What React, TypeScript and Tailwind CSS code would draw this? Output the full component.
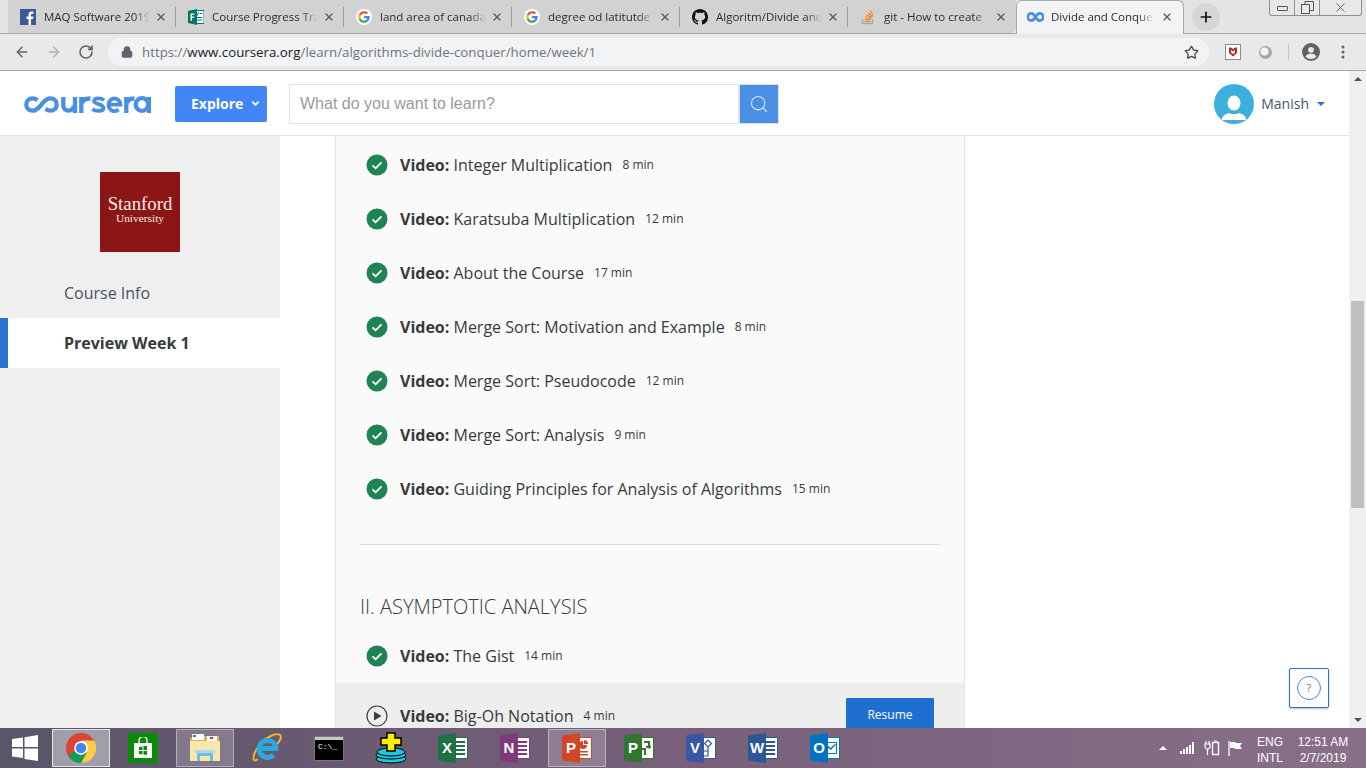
import React from "react";
import { Lock, Star, ArrowLeft, ArrowRight, RotateCw, X, Plus, Search, ChevronDown } from "lucide-react";

const tabs = [
  { t: "MAQ Software 2019", i: "fb" },
  { t: "Course Progress Tra", i: "proj" },
  { t: "land area of canada", i: "g" },
  { t: "degree od latitutde", i: "g" },
  { t: "Algoritm/Divide and", i: "gh" },
  { t: "git - How to create", i: "so" },
];

const GoogleIcon = () => (
  <svg width="16" height="16" viewBox="0 0 48 48">
    <circle cx="24" cy="24" r="24" fill="#fff" />
    <path fill="#EA4335" d="M24 13c3 0 5.300 1 7.200 2.800l4.800-4.800C33 8.200 29 6.500 24 6.500 17.200 6.500 11.300 10.400 8.400 16.100l5.600 4.300C15.400 16.100 19.300 13 24 13z" />
    <path fill="#4285F4" d="M41 24.600c0-1.300-.1-2.300-.3-3.300H24v6.500h9.700c-.4 2.200-1.700 4.200-3.700 5.500l5.500 4.300C38.800 34.600 41 30 41 24.600z" />
    <path fill="#FBBC05" d="M14 27.700c-.4-1.100-.6-2.400-.6-3.700s.2-2.500.6-3.700l-5.600-4.300C7.200 18.400 6.500 21.100 6.500 24s.7 5.600 1.900 8z" />
    <path fill="#34A853" d="M24 41.500c4.700 0 8.700-1.600 11.500-4.200L30 33c-1.500 1-3.500 1.800-6 1.800-4.700 0-8.600-3.100-10-7.200l-5.600 4.300c2.900 5.700 8.800 9.600 15.600 9.600z" />
  </svg>
);

const TabIcon = ({ kind }: { kind: string }) => {
  if (kind === "fb")
    return (
      <svg width="16" height="16" viewBox="0 0 16 16">
        <rect width="16" height="16" fill="#3b5998" />
        <path fill="#fff" d="M11 16V10h2l.4-2.500H11V6c0-.8.3-1.200 1.200-1.200h1.300V2.600c-.4 0-1-.1-1.800-.1-2 0-3.200 1.200-3.200 3.200v1.800H6.500V10h2v6z" />
      </svg>
    );
  if (kind === "proj")
    return (
      <svg width="16" height="16" viewBox="0 0 16 16">
        <rect x="6" y="1.500" width="10" height="13" fill="#fff" stroke="#077568" />
        <path d="M8 5l1 1 2-2.500M8 8.500h6M8 11h6M12 4.500h2" stroke="#077568" fill="none" strokeWidth="1.200" />
        <path fill="#077568" d="M0 2l9-2v16l-9-2z" />
        <path fill="#fff" d="M2.500 4.500h4v1.300H4v1.700h2.200v1.300H4v3H2.500z" />
      </svg>
    );
  if (kind === "g") return <GoogleIcon />;
  if (kind === "gh")
    return (
      <svg width="16" height="16" viewBox="0 0 16 16" fill="#111">
        <path d="M8 0C3.580 0 0 3.580 0 8c0 3.540 2.290 6.530 5.470 7.590.4.070.55-.17.55-.38 0-.19-.01-.82-.01-1.490-2.010.370-2.530-.490-2.690-.940-.09-.230-.48-.940-.82-1.130-.28-.150-.68-.520-.01-.530.630-.010 1.080.580 1.230.820.720 1.210 1.870.870 2.330.660.070-.520.280-.870.510-1.070-1.780-.2-3.640-.890-3.640-3.950 0-.870.310-1.590.820-2.150-.08-.2-.36-1.020.08-2.120 0 0 .67-.210 2.200.820.640-.180 1.320-.270 2-.270s1.360.090 2 .270c1.530-1.040 2.200-.820 2.200-.820.440 1.100.160 1.920.080 2.120.510.560.820 1.270.820 2.150 0 3.070-1.870 3.750-3.650 3.950.290.250.540.730.540 1.480 0 1.070-.01 1.930-.01 2.200 0 .210.150.460.550.380A8.010 8.010 0 0 0 16 8c0-4.420-3.580-8-8-8z" />
      </svg>
    );
  return (
    <svg width="16" height="16" viewBox="0 0 16 16" fill="none">
      <path d="M2.500 10v4.500h10V10" stroke="#a8a8a8" strokeWidth="1.300" />
      <path d="M4.500 12.500h6M4.700 10.300l5.900.6M5.200 8l5.800 1.500M6.300 5.700l5.200 2.900M8 3.600l4.300 4.100M10.300 1.500l2.800 5" stroke="#f48024" strokeWidth="1.200" />
    </svg>
  );
};

const Tab = ({ t, i, last }: { t: string; i: string; last: boolean }) => (
  <div className={"relative flex h-[33px] w-[168px] shrink-0 items-center bg-[#d2d2d2] pl-3 pr-[9px] " + (last ? "rounded-br-[6px]" : "")}>
    <div className="flex w-4 shrink-0 justify-center"><TabIcon kind={i} /></div>
    <div className="ml-2 w-[106px] overflow-hidden whitespace-nowrap text-[11.500px] leading-4 text-[#2b2b2b] [mask-image:linear-gradient(to_right,#000_85%,transparent_100%)]">{t}</div>
    <X size={12} strokeWidth={2.5} className="ml-[5px] shrink-0 text-[#5a5a5a]" />
    {!last && <div className="absolute right-0 top-[7px] h-5 w-px bg-[#9a9a9a]" />}
  </div>
);

const TaskIcon = ({ active, hl, children }: { active?: boolean; hl?: boolean; children: React.ReactNode }) => (
  <div className={"mx-[2px] flex h-[38px] w-[58px] shrink-0 items-center justify-center " + (active ? "border border-[#e6e4ea] bg-[#a19eab]" : hl ? "border border-white/40 bg-white/20" : "")}>
    {children}
  </div>
);

const Office = ({ l, c, children }: { l: string; c: string; children?: React.ReactNode }) => (
  <div className="relative h-[30px] w-[30px]">
    <div className="absolute right-0 top-[4px] flex h-[22px] w-[17px] flex-col items-end justify-center gap-[2px] border bg-white pr-[2px]" style={{ borderColor: c }}>
      {children ?? (
        <>
          <div className="h-[2px] w-[9px]" style={{ background: c }} />
          <div className="h-[2px] w-[9px]" style={{ background: c }} />
          <div className="h-[2px] w-[9px]" style={{ background: c }} />
          <div className="h-[2px] w-[9px]" style={{ background: c }} />
        </>
      )}
    </div>
    <div
      className="absolute left-0 top-0 flex h-[30px] w-[18px] items-center justify-center font-['Liberation_Sans',sans-serif] text-[15px] font-bold text-white [clip-path:polygon(0_8%,100%_0,100%_100%,0_92%)]"
      style={{ background: c }}
    >
      {l}
    </div>
  </div>
);

const Row = ({ title, mins }: { title: string; mins: string }) => (
  <div className="flex h-[54px] items-center pl-[30px]">
    <svg width="22" height="22" viewBox="0 0 22 22" className="shrink-0">
      <circle cx="11" cy="11" r="10.500" fill="#1f8354" />
      <path d="M6.500 11.300l3.100 3 5.900-6" fill="none" stroke="#fff" strokeWidth="1.800" />
    </svg>
    <div className="ml-[12px] text-[16px] leading-6 text-[#373a3c]">
      <span className="font-bold">Video: </span>
      {title}
    </div>
    <div className="ml-[10px] text-[12px] leading-4 text-[#373a3c]">{mins}</div>
  </div>
);

const rows = [
  ["Integer Multiplication", "8 min"],
  ["Karatsuba Multiplication", "12 min"],
  ["About the Course", "17 min"],
  ["Merge Sort: Motivation and Example", "8 min"],
  ["Merge Sort: Pseudocode", "12 min"],
  ["Merge Sort: Analysis", "9 min"],
  ["Guiding Principles for Analysis of Algorithms", "15 min"],
];

const Logo = () => (
  <svg width="127" height="17" viewBox="0 0 127 17" fill="none" stroke="#4a90e2" strokeWidth="4.300" role="img" aria-label="Coursera" className="mt-[1px] shrink-0">
    <path d="M13.500 4.200C12 3 10.500 2.300 8.500 2.300a6.200 6.200 0 0 0 0 12.400c4.500 0 6.500-3.500 9-6.200 2.500-3 4.500-6.200 9-6.200a6.200 6.200 0 0 1 0 12.400c-2 0-3.500-.8-5-2" />
    <path d="M39.300 1v8.500a5.200 5.200 0 0 0 10.400 0M51 1v16" />
    <path d="M57.300 17V1M57.300 9.500C57.300 4.500 60.500 2.500 66.500 2.500" />
    <path strokeWidth="3.800" d="M80 4.300C77.500 2 70.500 1.300 70 5c-.4 3.500 9.800 2.800 9.500 7-.3 3.800-8 3.700-11.200 1" />
    <path strokeWidth="3.800" d="M84 8.700h12.500a6 6.300 0 1 0-2 4.800" />
    <path d="M102.300 17V1M102.300 9.500c0-5 2.700-7 8.200-7" />
    <circle cx="118" cy="8.500" r="6.300" />
    <path d="M125 1v16" />
  </svg>
);

export default function App() {
  return (
    <div className="flex h-[768px] w-[1366px] flex-col overflow-hidden bg-white font-['Open_Sans',sans-serif]">
      {/* Tab strip */}
      <div className="flex h-[34px] shrink-0 border-b border-[#a8a8a8] bg-[#e4e4e4]">
        <div className="flex pl-[8px]">
          {tabs.map((x, idx) => (
            <Tab key={idx} t={x.t} i={x.i} last={idx === tabs.length - 1} />
          ))}
          <div className="relative z-10 -mb-px flex h-[34px] w-[168px] shrink-0 items-center rounded-t-[6px] border border-b-0 border-[#a8a8a8] bg-[#f1f3f4] pb-[2px] pl-[10px] pr-[9px]">
            <svg width="17" height="10" viewBox="0 0 17 10" fill="none" stroke="#4a8fdc" strokeWidth="2.600" className="shrink-0">
              <path d="M8.500 5C7 2.300 5.800 1.400 4.300 1.400a3.600 3.600 0 0 0 0 7.200C5.800 8.600 7 7.700 8.500 5c1.500-2.700 2.700-3.600 4.200-3.600a3.600 3.600 0 0 1 0 7.200C11.200 8.600 10 7.700 8.500 5z" />
            </svg>
            <div className="ml-[7px] w-[103px] overflow-hidden whitespace-nowrap text-[11.500px] leading-4 text-[#2b2b2b] [mask-image:linear-gradient(to_right,#000_85%,transparent_100%)]">Divide and Conquer</div>
            <X size={12} strokeWidth={2.5} className="ml-[7px] shrink-0 text-[#5a5a5a]" />
          </div>
          <div className="ml-2 mt-[3px] flex h-[28px] w-[28px] items-center justify-center rounded-full bg-[#d6d6d6]">
            <Plus size={16} strokeWidth={2.6} className="text-[#111]" />
          </div>
        </div>
        <div className="ml-auto mr-1 flex h-4 w-[93px] items-center rounded-b-[3px] border border-t-0 border-[#8f8f8f] bg-[#e8e8e8]">
          <div className="flex h-full w-[25px] items-center justify-center border-r border-[#8f8f8f]">
            <div className="mt-[2px] h-[5px] w-[11px] rounded-[1px] border border-[#555]" />
          </div>
          <div className="flex h-full w-[25px] items-center justify-center border-r border-[#8f8f8f]">
            <svg width="13" height="13" viewBox="0 0 13 13" fill="none" stroke="#555"><rect x="0.500" y="3.500" width="8" height="9" /><path d="M4 3.500V.500h8.500v9H8.500" /></svg>
          </div>
          <div className="flex h-full flex-1 items-center justify-center">
            <X size={15} strokeWidth={1.4} className="text-[#555]" />
          </div>
        </div>
      </div>

      {/* Toolbar */}
      <div className="flex h-[37px] shrink-0 items-center border-b border-[#a9a9a9] bg-[#e9e9e9]">
        <div className="flex w-[108px] shrink-0 items-center pl-[14px]">
          <ArrowLeft size={16} strokeWidth={2.2} className="text-[#5f6368]" />
          <ArrowRight size={16} strokeWidth={2.2} className="ml-4 text-[#aeb0b3]" />
          <RotateCw size={16} strokeWidth={2.4} className="ml-[16px] text-[#5f6368]" />
        </div>
        <div className="flex h-[28px] w-[1101px] shrink-0 items-center rounded-full bg-[#f1f3f4] pl-[13px]">
          <Lock size={12} strokeWidth={3} className="text-[#5f6368]" fill="#5f6368" />
          <div className="ml-[9px] text-[13.300px] leading-4 text-[#70757a]">
            https://<span className="text-[#202124]">www.coursera.org</span>/learn/algorithms-divide-conquer/home/week/1
          </div>
          <Star size={15} strokeWidth={2} className="ml-auto mr-[10px] text-[#444]" />
        </div>
        <div className="flex items-center">
          <div className="ml-4 flex h-[16px] w-[16px] items-start justify-center border border-[#8b8b8b] bg-white">
            <svg width="10" height="11" viewBox="0 0 10 11" className="mt-[2px]"><path d="M1 .500h2.200L5 2 6.800.500H9V6L5 9.500 1 6z" fill="#b3282d" /><path d="M3 3v2.500L5 7l2-1.500V3L5 4.500z" fill="#fff" /></svg>
          </div>
          <svg width="13" height="13" viewBox="0 0 13 13" className="ml-[18px]">
            <circle cx="6.500" cy="6.500" r="6.500" fill="#a6a6a6" />
            <circle cx="5.500" cy="5.500" r="4" fill="#f2f2f2" />
          </svg>
          <div className="ml-[16px] h-[16px] w-px bg-[#c5c5c5]" />
          <svg width="18" height="18" viewBox="0 0 18 18" className="ml-[13px] shrink-0">
            <circle cx="9" cy="9" r="9" fill="#5f6368" />
            <circle cx="9" cy="6.800" r="2.900" fill="#e9e9e9" />
            <path d="M3.500 13.500c1-2 3.500-3 5.500-3s4.500 1 5.500 3A7 7 0 0 1 9 16a7 7 0 0 1-5.500-2.500z" fill="#e9e9e9" />
          </svg>
          <svg width="4" height="14" viewBox="0 0 4 14" fill="#5f6368" className="ml-[21px] shrink-0">
            <circle cx="2" cy="2" r="1.500" /><circle cx="2" cy="7" r="1.500" /><circle cx="2" cy="12" r="1.500" />
          </svg>
        </div>
      </div>

      {/* Page */}
      <div className="flex min-h-0 flex-1">
        <div className="flex min-w-0 flex-1 flex-col">
          {/* Header */}
          <div className="flex h-[65px] shrink-0 items-center border-b border-[#e1e1e1] bg-white pl-6 pt-[2px]">
            <Logo />
            <div className="ml-6 flex h-[36px] w-[92px] items-center gap-[7px] rounded-[2px] bg-[#4285f4] pb-px pl-4 text-[14px] font-bold text-white">
              Explore
              <ChevronDown size={11} strokeWidth={4} />
            </div>
            <div className="ml-[22px] flex h-10 w-[450px] items-center border border-[#e1e1e1] bg-white pl-[10px] font-['Liberation_Sans',sans-serif] text-[16px] text-[#9b9b9b]">
              What do you want to learn?
            </div>
            <div className="flex h-10 w-[40px] items-center justify-center border border-[#e1e1e1] bg-[#4a90e2]">
              <Search size={20} strokeWidth={1.3} className="text-[#dbe9f9]" />
            </div>
            <div className="ml-auto mr-[24px] flex items-center">
              <div className="flex h-10 w-10 items-end justify-center overflow-hidden rounded-full bg-[#3cafdc]">
                <svg width="26" height="30" viewBox="0 0 26 30" fill="#fff">
                  <ellipse cx="13" cy="9" rx="6.500" ry="7.500" />
                  <path d="M1 26c0-4 3-6 7-7 1.500 1.500 8.500 1.500 10 0 4 1 7 3 7 7z" />
                </svg>
              </div>
              <div className="ml-[7px] text-[14px] leading-5 text-[#44566c]">Manish</div>
              <div className="ml-[8px] h-0 w-0 border-x-[4px] border-t-[4px] border-x-transparent border-t-[#2f6fd8]" />
            </div>
          </div>

          {/* Body */}
          <div className="relative flex min-h-0 flex-1 overflow-hidden">
            {/* Sidebar */}
            <div className="w-[280px] shrink-0 bg-[#efefef]">
              <div className="mt-[36px] flex justify-center">
                <div className="flex h-[80px] w-[80px] flex-col items-center justify-center bg-[#8c1515] pb-[4px] font-['Liberation_Serif',serif] text-[#f5ecec]">
                  <div className="text-[18.800px] leading-[17px]">Stanford</div>
                  <div className="text-[11.400px] leading-[13px]">University</div>
                </div>
              </div>
              <div className="mt-[16px] flex h-[50px] items-center pl-[64px] text-[16px] text-[#47535f]">Course Info</div>
              <div className="flex h-[50px] items-center border-l-[8px] border-[#2a73d2] bg-white pl-[56px] text-[16px] font-bold text-[#373a3c]">Preview Week 1</div>
            </div>

            {/* Content */}
            <div className="ml-[55px] w-[630px] shrink-0 border-x border-[#e4e4e4] bg-[#fafafa] pt-[2px]">
              {rows.map((r) => (
                <Row key={r[0]} title={r[0]} mins={r[1]} />
              ))}
              <div className="mx-6 mt-[28px] h-px bg-[#d9d9d9]" />
              <div className="mt-[50px] pl-6 text-[20px] font-light leading-6 text-[#373a3c]">II. ASYMPTOTIC ANALYSIS</div>
              <div className="mt-[10px]">
                <Row title="The Gist" mins="14 min" />
              </div>
              <div className="flex h-[60px] items-center justify-between bg-[#eeeeee] pl-[30px] pr-[30px] pt-[5px]">
                <div className="flex items-center">
                  <svg width="22" height="22" viewBox="0 0 22 22" className="shrink-0">
                    <circle cx="11" cy="11" r="10" fill="none" stroke="#3d3d3d" strokeWidth="1.200" />
                    <path d="M8 6.500v9l7.500-4.500z" fill="#3d3d3d" />
                  </svg>
                  <div className="ml-[12px] text-[16px] leading-6 text-[#373a3c]">
                    <span className="font-bold">Video: </span>Big-Oh Notation
                  </div>
                  <div className="ml-[10px] text-[12px] leading-4 text-[#373a3c]">4 min</div>
                </div>
                <div className="mt-[9px] flex h-[44px] w-[88px] shrink-0 items-start justify-center rounded-[1px] bg-[#1f6fd0] pt-[9px] text-[12px] leading-4 text-white">Resume</div>
              </div>
            </div>

            {/* Help */}
            <div className="absolute left-[1289px] top-[532px] flex h-10 w-10 items-center justify-center rounded-[2px] border border-[#2a73d2] bg-white shadow-[0_1px_2px_rgba(0,0,0,0.25)]">
              <div className="flex h-6 w-6 items-center justify-center rounded-full border border-[#4285f4] text-[10px] text-[#5a6b8c]">?</div>
            </div>
          </div>
        </div>

        {/* Scrollbar */}
        <div className="flex w-[17px] shrink-0 flex-col items-center bg-[#f0f0f0]">
          <div className="mt-[6px] h-0 w-0 border-x-[4px] border-b-[4px] border-x-transparent border-b-[#505050]" />
          <div className="mt-[220px] h-[207px] w-[13px] bg-[#c0c0c0]" />
          <div className="mt-auto mb-[6px] h-0 w-0 border-x-[4px] border-t-[4px] border-x-transparent border-t-[#505050]" />
        </div>
      </div>

      {/* Taskbar */}
      <div className="flex h-10 shrink-0 items-center bg-gradient-to-r from-[#5a5568] via-[#78607a] to-[#896f88] text-white">
        <div className="flex w-[50px] shrink-0 justify-center">
          <svg width="26" height="26" viewBox="0 0 26 26" fill="#fff"><path d="M0 4l11-1.500V12H0zM12.500 2.300L26 0v12H12.500zM0 13.500h11V23L0 21.500zM12.500 13.500H26V26l-13.500-2z" /></svg>
        </div>
        <TaskIcon active>
          <svg width="30" height="30" viewBox="0 0 48 48">
            <circle cx="24" cy="24" r="24" fill="#db4437" />
            <path d="M24 24L3.200 36A24 24 0 0 0 24 48l10-18z" fill="#0f9d58" />
            <path d="M24 24l10 6-10 18A24 24 0 0 0 45 12H24z" fill="#ffcd40" />
            <circle cx="24" cy="24" r="11" fill="#fff" />
            <circle cx="24" cy="24" r="8.500" fill="#4285f4" />
          </svg>
        </TaskIcon>
        <TaskIcon>
          <div className="flex h-[30px] w-[30px] items-center justify-center bg-[#0a8a0a]">
            <svg width="20" height="22" viewBox="0 0 20 22"><path d="M6 6V3.500a4 4 0 0 1 8 0V6" fill="none" stroke="#fff" strokeWidth="1.300" /><rect x="1" y="6" width="18" height="15" fill="#fff" /><path d="M6 10l3.500-.5V13H6zM10.500 9.300L14 9v4h-3.500zM6 14h3.500v3.500L6 17zM10.500 14H14v4l-3.500-.5z" fill="#0a8a0a" /></svg>
          </div>
        </TaskIcon>
        <TaskIcon hl>
          <svg width="32" height="30" viewBox="0 0 32 30">
            <path d="M1 5h12l2-2h15v25H1z" fill="#d9b35c" />
            <rect x="3" y="1" width="12" height="6" fill="#fff" />
            <rect x="4" y="2" width="3" height="2" fill="#1aa34a" />
            <rect x="18" y="3" width="10" height="5" fill="#fff" />
            <rect x="21" y="4" width="3" height="2" fill="#c0392b" />
            <path d="M1 8h30v20H1z" fill="#f8e6ab" />
            <path d="M8 28v-7a2 2 0 0 1 2-2h12a2 2 0 0 1 2 2v7h-3v-5H11v5z" fill="#6fbfe4" />
            <rect x="6" y="17" width="20" height="3" fill="#a9dbf0" />
          </svg>
        </TaskIcon>
        <TaskIcon>
          <svg width="30" height="32" viewBox="0 0 30 32" fill="none">
            <path d="M6 27C0 32 0 24 6 15 12 6 24 0 28 3c2 2 0 6-3 9" stroke="#f3b52f" strokeWidth="2" />
            <path d="M7.500 16.500H24a8.500 8.500 0 1 0-2.500 6.500" stroke="#2ea7dd" strokeWidth="5" />
          </svg>
        </TaskIcon>
        <TaskIcon>
          <div className="h-[25px] w-[30px] border border-[#777] bg-black">
            <div className="h-[3px] w-full bg-[#c8c8c8]" />
            <div className="pl-[3px] font-['Liberation_Mono',monospace] text-[8px] leading-[14px] text-white">C:\_</div>
          </div>
        </TaskIcon>
        <TaskIcon>
          <svg width="32" height="32" viewBox="0 0 32 32">
            <ellipse cx="16" cy="27" rx="15" ry="4" fill="#20c6dd" stroke="#000" />
            <ellipse cx="16" cy="23" rx="15" ry="4" fill="#20c6dd" stroke="#000" />
            <ellipse cx="16" cy="20" rx="14" ry="4" fill="#20c6dd" stroke="#000" />
            <path d="M12 1h8v5h6v7h-6v6h-8v-6H6V6h6z" fill="#ffee00" stroke="#000" strokeWidth="1.500" />
          </svg>
        </TaskIcon>
        <TaskIcon><Office l="X" c="#1e7145" /></TaskIcon>
        <TaskIcon><Office l="N" c="#80397b" /></TaskIcon>
        <TaskIcon hl>
          <Office l="P" c="#d24726">
            <svg width="11" height="16" viewBox="0 0 11 16" fill="#d24726"><path d="M5 1a4 4 0 1 0 4 4H5z" /><path d="M6 0a4 4 0 0 1 4 4H6z" /><rect x="1" y="11" width="9" height="1.500" /><rect x="1" y="14" width="9" height="1.500" /></svg>
          </Office>
        </TaskIcon>
        <TaskIcon>
          <Office l="P" c="#31752f">
            <svg width="11" height="16" viewBox="0 0 11 16" fill="none" stroke="#31752f" strokeWidth="2"><path d="M4 2h5v6M9 8l-3-2M9 8l2-2M1 9h4v6" /></svg>
          </Office>
        </TaskIcon>
        <TaskIcon>
          <Office l="V" c="#3955a3">
            <svg width="12" height="18" viewBox="0 0 12 18" fill="none" stroke="#3955a3" strokeWidth="1.200"><path d="M7 1l3.500 3.500L7 8 3.500 4.500zM7 8v4M1 12h6v5H1z" /></svg>
          </Office>
        </TaskIcon>
        <TaskIcon><Office l="W" c="#2b579a" /></TaskIcon>
        <TaskIcon>
          <Office l="O" c="#0072c6">
            <svg width="13" height="12" viewBox="0 0 13 12"><rect width="13" height="12" fill="#0072c6" /><rect x="1" y="1" width="11" height="10" fill="#fff" /><path d="M1.500 2.500L6.500 7l5-4.500" fill="none" stroke="#0072c6" strokeWidth="1.500" /></svg>
          </Office>
        </TaskIcon>

        <div className="ml-auto flex items-center font-['Liberation_Sans',sans-serif] text-[12px] leading-[16px]">
          <div className="h-0 w-0 border-x-[4px] border-b-[4px] border-x-transparent border-b-white" />
          <svg width="16" height="12" viewBox="0 0 16 12" fill="#fff" className="ml-[13px]">
            <rect x="0" y="9" width="2" height="3" /><rect x="3" y="7" width="2" height="5" /><rect x="6" y="5" width="2" height="7" /><rect x="9" y="3" width="2" height="9" /><rect x="12" y="0" width="2" height="12" />
          </svg>
          <svg width="16" height="16" viewBox="0 0 16 16" fill="none" stroke="#fff" className="ml-[8px]">
            <path d="M2 1v3M5 1v3M1 4h5v3l-1.500 2h-2L1 7zM3.500 9v6" strokeWidth="1.200" />
            <rect x="8.500" y="2.500" width="6" height="12" strokeWidth="1.400" />
            <path d="M10 1h3" />
          </svg>
          <svg width="16" height="16" viewBox="0 0 16 16" className="ml-[7px]">
            <path d="M2 1v15" stroke="#fff" strokeWidth="1.300" />
            <path d="M3 2h5l1 1h6l-2 3 2 3H8L7 8H3z" fill="#fff" />
          </svg>
          <div className="ml-[14px] w-[26px] pt-[3px] text-center"><div>ENG</div><div>INTL</div></div>
          <div className="ml-[14px] mr-[17px] w-[52px] pt-[3px] text-center"><div>12:51 AM</div><div>2/7/2019</div></div>
        </div>
      </div>
    </div>
  );
}
